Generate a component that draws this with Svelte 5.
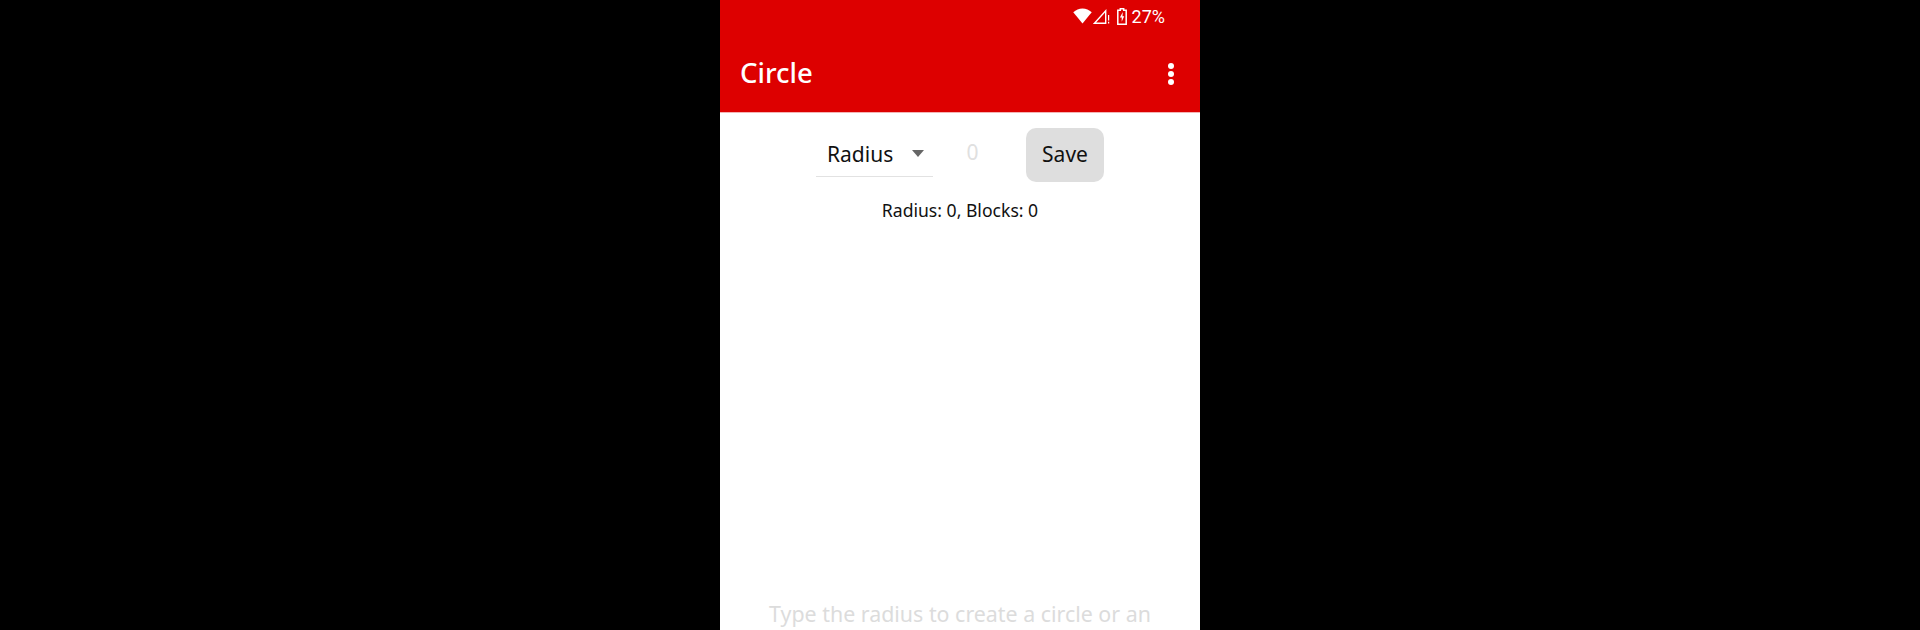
<script>
  let radius = 0;
  let blocks = 0;
</script>

<div class="screen">
  <div class="phone">
    <header class="appbar">
      <div class="status">
        <svg class="wifi" viewBox="0 0 20 17" width="19" height="16"><path d="M10 16.500 0.200 4.500C3 1.900 6.300.500 10 .500s7 1.400 9.800 4z" fill="#fff"/></svg>
        <svg class="signal" viewBox="0 0 17 15" width="17" height="15">
          <path d="M1.500 14.200 12.700 1.900v12.300z" fill="none" stroke="#fff" stroke-width="1.400"/>
          <path d="M15.600 6v5.500M15.600 12.800v1.800" stroke="#fff" stroke-width="1.200" fill="none"/>
        </svg>
        <svg class="battery" viewBox="0 0 10 17" width="10" height="17">
          <path d="M3.300.800h3.400v1.500h2.500v13.900H.800V2.300h2.500z" fill="none" stroke="#fff" stroke-width="1.500"/>
          <path d="M5.800 4 2.900 9.500h1.800v4.200l2.500-5.400H5.500z" fill="#fff"/>
        </svg>
        <span class="pct">27%</span>
      </div>
      <div class="toolbar">
        <h1>Circle</h1>
        <div class="more"><i></i><i></i><i></i></div>
      </div>
    </header>
    <main class="content">
      <div class="controls">
        <div class="spinner">
          <span>Radius</span>
          <b class="caret"></b>
        </div>
        <div class="field">0</div>
        <button>Save</button>
      </div>
      <p class="info">Radius: {radius}, Blocks: {blocks}</p>
      <div class="canvas"></div>
      <p class="hint">Type the radius to create a circle or an</p>
    </main>
  </div>
</div>

<style>
  :global(body) {
    background: #000;
    overflow: hidden;
  }
  .screen {
    height: 630px;
    display: flex;
    justify-content: center;
    overflow: hidden;
    font-family: "Noto Sans", sans-serif;
  }
  .phone {
    width: 480px;
    height: 630px;
    background: #fff;
    display: flex;
    flex-direction: column;
    overflow: hidden;
  }
  .appbar {
    background: #dd0000;
    height: 113px;
    box-sizing: border-box;
    border-bottom: 1px solid #f3b4b4;
    flex-shrink: 0;
    color: #fff;
  }
  .status {
    height: 32px;
    display: flex;
    align-items: center;
    justify-content: flex-end;
    padding-right: 35px;
  }
  .wifi { margin-right: 1px; }
  .signal { margin-right: 7px; margin-top: 1px; }
  .battery { margin-right: 5px; }
  .pct {
    font-family: Roboto, sans-serif;
    font-size: 18px;
    font-weight: 400;
  }
  .toolbar {
    height: 80px;
    display: flex;
    align-items: center;
    justify-content: space-between;
    padding: 0 26px 0 20px;
  }
  h1 {
    margin: 0;
    font-size: 27.500px;
    font-weight: 500;
  }
  .more {
    display: flex;
    flex-direction: column;
    gap: 2px;
    margin-top: 3px;
  }
  .more i {
    width: 6px;
    height: 6px;
    border-radius: 50%;
    background: #fff;
  }
  .content {
    flex: 1;
    display: flex;
    flex-direction: column;
    align-items: center;
    min-height: 0;
  }
  .controls {
    display: flex;
    align-items: flex-start;
    margin-top: 15px;
  }
  .spinner {
    width: 117px;
    height: 49px;
    box-sizing: border-box;
    border-bottom: 1px solid #e2e2e2;
    padding: 3px 0 0 11px;
    display: flex;
    align-items: center;
    font-size: 21px;
    color: #111;
  }
  .caret {
    margin-left: 19px;
    border-left: 6px solid transparent;
    border-right: 6px solid transparent;
    border-top: 7px solid #666;
  }
  .field {
    width: 79px;
    height: 48px;
    margin-right: 14px;
    line-height: 49px;
    text-align: center;
    font-size: 21px;
    color: #e0e0e0;
  }
  button {
    width: 78px;
    height: 54px;
    border: 0;
    border-radius: 10px;
    background: #dedede;
    color: #111;
    font-family: inherit;
    font-size: 21px;
    padding: 0 0 2px;
  }
  .info {
    margin: 16px 0 0;
    font-size: 17.600px;
    line-height: 24px;
    color: #111;
  }
  .canvas { flex: 1; }
  .hint {
    margin: 0 0 2px;
    font-size: 21.400px;
    line-height: 28px;
    color: #dcdcdc;
    white-space: nowrap;
  }
</style>
